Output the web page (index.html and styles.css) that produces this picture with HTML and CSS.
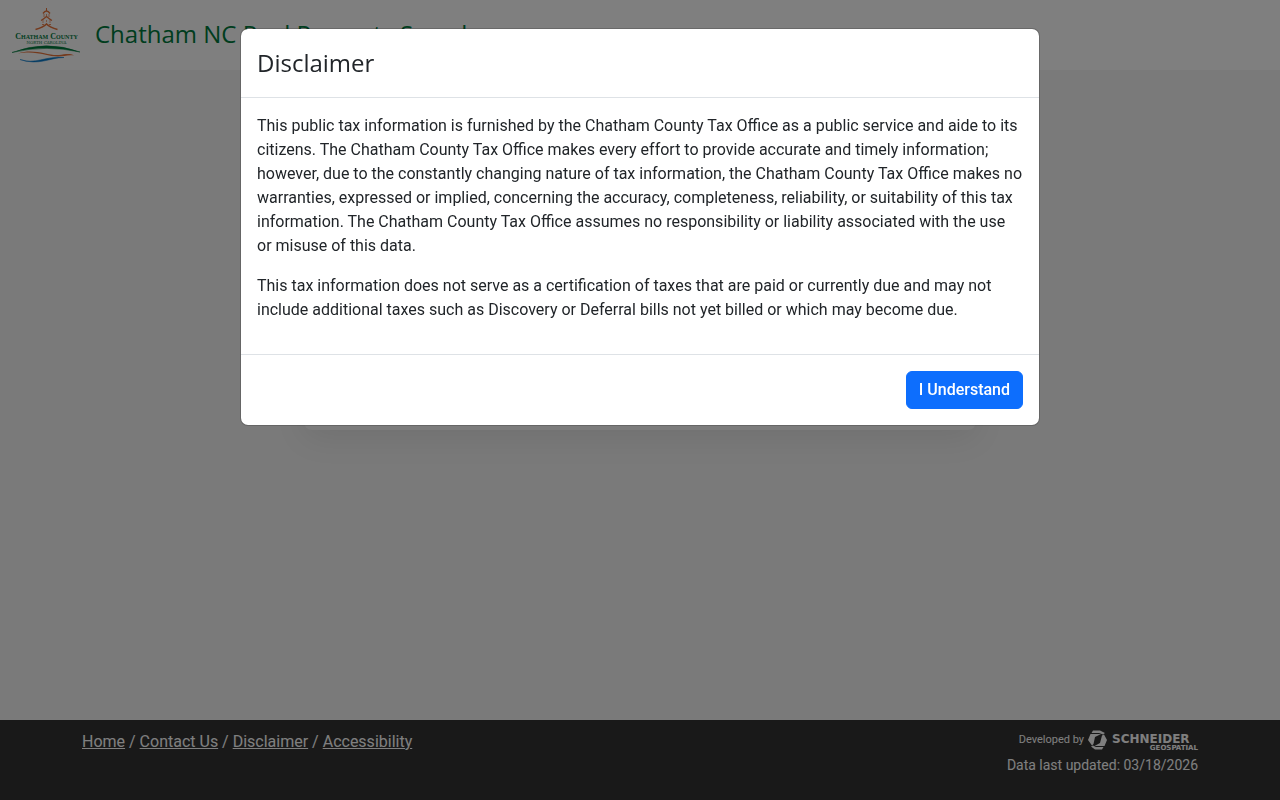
FILE: index.html
```html
<!DOCTYPE html>
<html lang="en">
<head>
<meta charset="utf-8">
<meta name="viewport" content="width=device-width, initial-scale=1">
<title>Chatham NC Real Property Search</title>
<link rel="stylesheet" href="styles.css">
</head>
<body>
<header class="site-header">
  <svg class="county-logo" viewBox="0 0 69 56" role="img" aria-label="Chatham County North Carolina">
    <g fill="none" stroke="#e8743b">
      <path d="M34.500 1v3" stroke-width="1"/>
      <path d="M31 6.500q3.500-5 7 0" stroke-width="1.400"/>
      <path d="M32 7v3M34.500 7v3M37 7v3" stroke-width=".7"/>
      <path d="M29 13.500q2-1 5.500-4q3.500 3 5.500 4" stroke-width="1.200"/>
      <path d="M31 13v3M34.500 13v2M38 13v3" stroke-width=".6"/>
      <path d="M30 17.500h2M37 17.500h2" stroke-width=".8"/>
      <path d="M23.500 22.500Q31 20.500 34.500 17Q38 20.500 45.500 22.500" stroke-width="1.600"/>
    </g>
    <text x="34.500" y="32" class="logo-name">C<tspan class="logo-small">HATHAM</tspan> C<tspan class="logo-small">OUNTY</tspan></text>
    <text x="34.500" y="37" class="logo-state">NORTH CAROLINA</text>
    <path d="M0 45.500Q34 32.500 68 45Q34 37.500 0 45.500Z" fill="#007a3d" stroke="#007a3d" stroke-width=".5"/>
    <path d="M6 46.500C22 41 36 49 47 48C53 47.300 58 46 62 48.500C56 47.500 52 49.500 46 49.500C35 49.500 24 43 6 46.500Z" fill="#e8743b"/>
    <path d="M8 52.500C23 58 34 48.500 52 50.500C38 50.500 27 59 8 52.500Z" fill="#0878c8" stroke="#0878c8" stroke-width=".5"/>
  </svg>
  <h1 class="site-title">Chatham NC Real Property Search</h1>
</header>
<main class="page"><section class="search-card"></section></main>
<footer class="site-footer">
  <div class="container">
    <nav class="footer-links"><a href="#">Home</a> / <a href="#">Contact Us</a> / <a href="#">Disclaimer</a> / <a href="#">Accessibility</a></nav>
    <div class="credits">
      <div class="developer"><span>Developed by</span>
        <svg class="vendor-logo" viewBox="0 0 110 20" role="img" aria-label="Schneider Geospatial">
          <path fill="#fff" d="M5 .5H12L17 3 15 4.500 11 3H3.500ZM2.500 4H13L7 7 5.500 14 4 15.500 0 10ZM14 5.500 16 4.500 19 10 16.500 16H6.500L12 13ZM3 16.500 5 15.500 8 17H15.500L14 19.500H7Z"/>
          <text x="24" y="13" class="vendor-name">SCHNEIDER</text>
          <text x="110" y="20" class="vendor-sub">GEOSPATIAL</text>
        </svg>
      </div>
      <div class="updated">Data last updated: 03/18/2026</div>
    </div>
  </div>
</footer>
<div class="backdrop">
  <div class="modal" role="dialog" aria-modal="true" aria-labelledby="modal-title">
    <div class="modal-header"><h2 class="modal-title" id="modal-title">Disclaimer</h2></div>
    <div class="modal-body">
      <p>This public tax information is furnished by the Chatham County Tax Office as a public service and aide to its citizens. The Chatham County Tax Office makes every effort to provide accurate and timely information; however, due to the constantly changing nature of tax information, the Chatham County Tax Office makes no warranties, expressed or implied, concerning the accuracy, completeness, reliability, or suitability of this tax information. The Chatham County Tax Office assumes no responsibility or liability associated with the use or misuse of this data.</p>
      <p>This tax information does not serve as a certification of taxes that are paid or currently due and may not include additional taxes such as Discovery or Deferral bills not yet billed or which may become due.</p>
    </div>
    <div class="modal-footer"><button class="btn" type="button">I Understand</button></div>
  </div>
</div>
</body>
</html>
```
FILE: styles.css
```css
* { box-sizing: border-box; }
body {
  margin: 0;
  min-height: 100vh;
  display: flex;
  flex-direction: column;
  background: #f4f4f4;
  color: #212529;
  font: 16px/24px Roboto, sans-serif;
}
.site-header {
  display: flex;
  align-items: flex-start;
  gap: 14px;
  min-height: 70px;
  padding: 7px 12px;
  background: #fff;
}
.county-logo { flex: none; width: 69px; height: 56px; overflow: visible; }
.logo-name { font: 700 8px "Liberation Serif", serif; fill: #007a3d; text-anchor: middle; }
.logo-small { font-size: 6px; }
.logo-state { font: 400 4px "DejaVu Serif", serif; fill: #007a3d; text-anchor: middle; }
.site-title { margin: 0; font: 400 24px/54px "Open Sans", sans-serif; color: #007a3d; }
.page { flex: 1; padding: 30px 16px; }
.search-card {
  max-width: 672px;
  min-height: 330px;
  margin: 0 auto;
  border-radius: 8px;
  background: #f8f8f8;
  box-shadow: 0 8px 32px rgba(0, 0, 0, .08);
}
.site-footer { min-height: 80px; padding: 10px 0; background: #333; color: #fff; }
.container { display: flex; justify-content: space-between; max-width: 1140px; margin: 0 auto; padding: 0 12px; }
.footer-links a { color: inherit; }
.credits { display: flex; flex-direction: column; gap: 3px; font-size: 14px; text-align: right; }
.developer { display: flex; justify-content: flex-end; align-items: center; gap: 4px; font-size: 11px; line-height: 20px; }
.vendor-logo { width: 110px; height: 20px; overflow: visible; }
.vendor-name { font: 700 12px "DejaVu Sans", sans-serif; fill: #fff; }
.vendor-sub { font: 700 7px "DejaVu Sans", sans-serif; fill: #fff; text-anchor: end; }
.backdrop {
  position: fixed;
  inset: 0;
  padding: 28px;
  overflow: auto;
  background: rgba(0, 0, 0, .5);
}
.modal {
  max-width: 800px;
  margin: 0 auto;
  border: 1px solid rgba(0, 0, 0, .175);
  border-radius: 8px;
  background: #fff;
  background-clip: padding-box;
}
.modal-header { padding: 16px; border-bottom: 1px solid #dee2e6; }
.modal-title { margin: 0; font: 400 24px/36px "Open Sans", sans-serif; }
.modal-body { padding: 16px; }
.modal-body p { margin: 0 0 16px; }
.modal-footer { display: flex; justify-content: flex-end; padding: 16px; border-top: 1px solid #dee2e6; }
.btn {
  padding: 6px 12px;
  border: 1px solid #0d6efd;
  border-radius: 6px;
  background: #0d6efd;
  color: #fff;
  font: 500 16px/24px Roboto, sans-serif;
}
```
